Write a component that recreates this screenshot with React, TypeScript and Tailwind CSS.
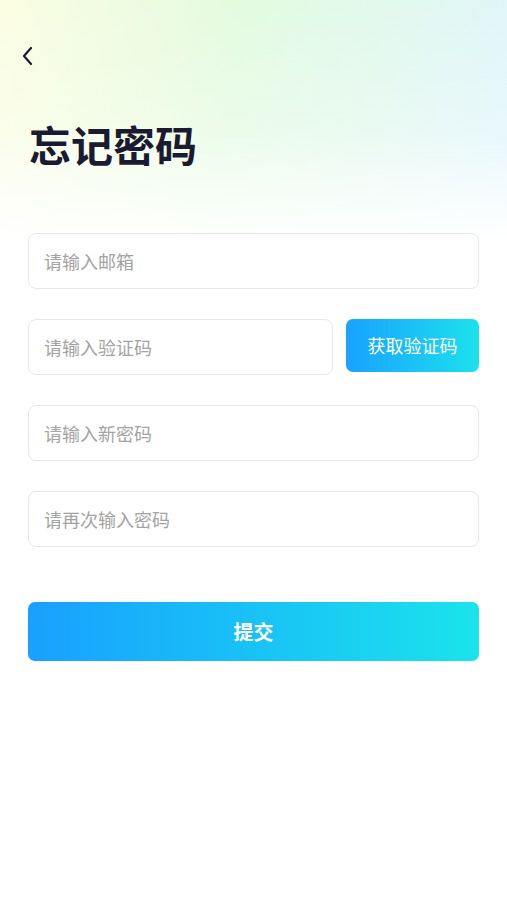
import { useState } from "react"

const font = { fontFamily: '"Noto Sans CJK SC", "Noto Sans", sans-serif' }

function Field({ placeholder, value, onChange, className = "" }: { placeholder: string; value: string; onChange: (v: string) => void; className?: string }) {
  return (
    <input
      placeholder={placeholder}
      value={value}
      onChange={(e) => onChange(e.target.value)}
      className={"h-[56px] rounded-[8px] border border-[#e8e8e8] bg-white px-[15px] text-[18px] text-[#333] placeholder:text-[#a3a3a3] outline-none " + className}
    />
  )
}

export default function App() {
  const [email, setEmail] = useState("")
  const [code, setCode] = useState("")
  const [pwd, setPwd] = useState("")
  const [pwd2, setPwd2] = useState("")

  return (
    <div className="relative min-h-[900px] w-full bg-white overflow-hidden" style={font}>
      <div className="absolute inset-x-0 top-0 h-[240px] bg-[linear-gradient(100deg,#fbfde2_0%,#e3fbe0_45%,#dff5fb_100%)]" />
      <div className="absolute inset-x-0 top-0 h-[240px] bg-[linear-gradient(to_bottom,rgba(255,255,255,0)_0%,rgba(255,255,255,0.3)_55%,#ffffff_100%)]" />

      <div className="relative flex flex-col px-[28px]">
        <button className="mt-[45px] -ml-[12px] flex h-[22px] w-[24px] items-center justify-center text-[#1d1d2e]">
          <svg width="14" height="20" viewBox="0 0 14 20" fill="none">
            <path d="M10 2 L3 10 L10 18" stroke="currentColor" strokeWidth="2.2" strokeLinecap="round" strokeLinejoin="round" />
          </svg>
        </button>

        <h1 className="mt-[51px] ml-[1px] text-[42px] font-semibold leading-[52px] text-[#1a1a30]">忘记密码</h1>

        <div className="mt-[63px] flex flex-col gap-[30px]">
          <Field placeholder="请输入邮箱" value={email} onChange={setEmail} className="w-full" />
          <div className="flex items-start gap-[13px]">
            <Field placeholder="请输入验证码" value={code} onChange={setCode} className="min-w-0 flex-1" />
            <button className="h-[53px] w-[133px] shrink-0 rounded-[7px] bg-[linear-gradient(to_right,#19a2ff,#1ce1ec)] text-[18px] text-white">获取验证码</button>
          </div>
          <Field placeholder="请输入新密码" value={pwd} onChange={setPwd} className="w-full" />
          <Field placeholder="请再次输入密码" value={pwd2} onChange={setPwd2} className="w-full" />
        </div>

        <button className="mt-[55px] h-[59px] w-full rounded-[7px] bg-[linear-gradient(to_right,#18a0ff,#19c2f5_50%,#1be3ec)] text-[20px] font-bold text-white">提交</button>
      </div>
    </div>
  )
}
